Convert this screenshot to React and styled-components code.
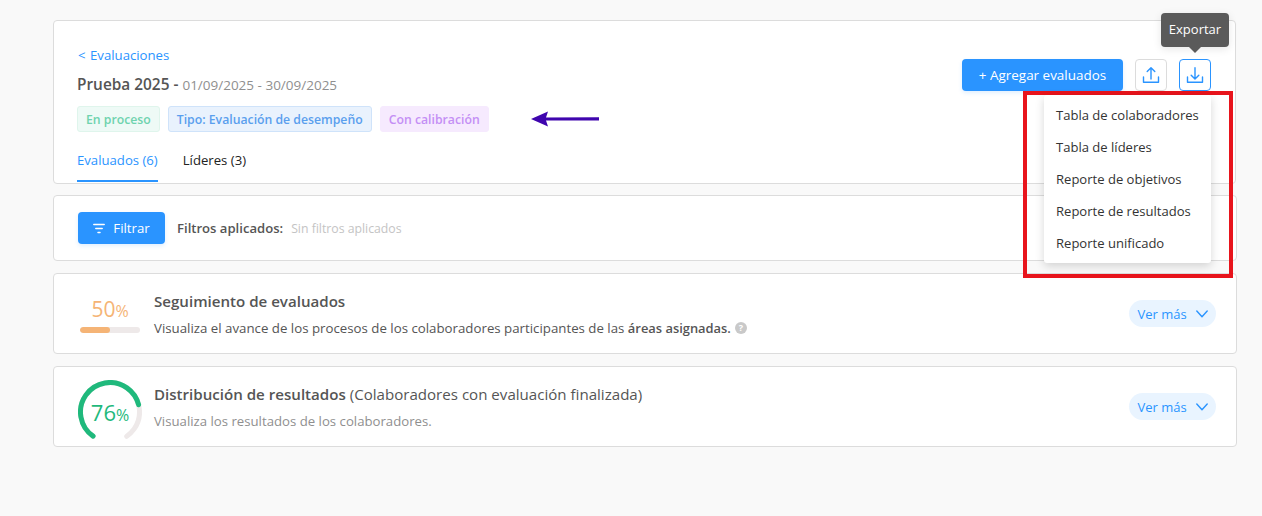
import React from "react";
import styled, { createGlobalStyle } from "styled-components";

const Global = createGlobalStyle`
  html, body { margin: 0; padding: 0; background: #f9f9f9; }
  body { font-family: "Open Sans", "Noto Sans", "Liberation Sans", sans-serif; font-size: 13px; color: #444; }
  * { box-sizing: border-box; }
`;

const Page = styled.div`
  position: relative;
  width: 1262px;
  height: 516px;
  padding: 20px 25px 0 53px;
  display: flex;
  flex-direction: column;
  gap: 12px;
  overflow: hidden;
`;

const Card = styled.section`
  background: #fff;
  border: 1px solid #dcdcdc;
  border-radius: 4px;
`;

const Header = styled(Card)`
  width: 1183px;
  height: 164px;
  margin-bottom: -1px;
  padding: 25px 24px 0 23px;
  display: flex;
  justify-content: space-between;
`;

const HeaderLeft = styled.div`
  display: flex;
  flex-direction: column;
`;

const BackLink = styled.a`
  color: #2a94ff;
  font-size: 13.2px;
  line-height: 18px;
  padding-left: 1px;
  word-spacing: 1px;
`;

const Title = styled.div`
  margin-top: 11px;
  line-height: 20px;
  font-size: 15.4px;
  font-weight: 600;
  color: #555;
`;

const Dates = styled.span`
  font-size: 13.5px;
  font-weight: 400;
  color: #8f8f8f;
`;

const Tags = styled.div`
  display: flex;
  gap: 8px;
  margin-top: 11px;
`;

const Tag = styled.span`
  height: 26px;
  padding: 0 8px;
  display: flex;
  align-items: center;
  font-size: 12.25px;
  font-weight: 600;
  border-radius: 3px;
  color: ${(p) => p.$color};
  background: ${(p) => p.$bg};
  border: 1px solid ${(p) => p.$line};
`;

const Tabs = styled.div`
  display: flex;
  gap: 25px;
  margin-top: 13px;
`;

const Tab = styled.div`
  height: 37px;
  padding-top: 6px;
  font-size: 13.15px;
  line-height: 18px;
  color: ${(p) => (p.$active ? "#2a94ff" : "#222")};
  border-bottom: 2px solid ${(p) => (p.$active ? "#2a94ff" : "transparent")};
`;

const Actions = styled.div`
  display: flex;
  align-items: flex-start;
  padding-top: 13px;
  height: 60px;
`;

const PrimaryButton = styled.button`
  height: 32px;
  display: flex;
  align-items: center;
  justify-content: center;
  gap: 8px;
  border: 0;
  border-radius: 4px;
  background: #2a94ff;
  color: #fff;
  font: inherit;
  font-size: ${(p) => p.$size}px;
  box-shadow: 0 2px 4px rgba(42, 148, 255, 0.15);
  width: ${(p) => p.$w}px;
  padding: 0;
`;

const IconButton = styled.button`
  width: 32px;
  height: 32px;
  margin-left: 12px;
  padding: 0;
  display: flex;
  align-items: center;
  justify-content: center;
  background: #fff;
  border-radius: 4px;
  border: 1px solid ${(p) => (p.$active ? "#2a94ff" : "#dcdcdc")};
`;

const FilterCard = styled(Card)`
  height: 66px;
  padding: 0 24px;
  display: flex;
  align-items: center;
`;

const FilterLabel = styled.span`
  margin-left: 12px;
  font-size: 13.1px;
  font-weight: 600;
  color: #555;
`;

const FilterEmpty = styled.span`
  margin-left: 8px;
  font-size: 12.25px;
  color: #c4c4c4;
`;

const SummaryCard = styled(Card)`
  height: 81px;
  padding: 0 20px 0 24px;
  display: flex;
  align-items: center;
`;

const Metric = styled.div`
  width: 76px;
  flex: none;
  display: flex;
  flex-direction: column;
`;

const BarValue = styled.div`
  width: 64px;
  text-align: center;
  color: #f5b476;
  font-size: 21px;
  line-height: 26px;
  margin-top: 2px;
  white-space: nowrap;
`;

const Pct = styled.span`
  font-size: 16px;
`;

const BarTrack = styled.div`
  width: 60px;
  height: 6px;
  margin: 3px 0 0 2px;
  background: #eee9e9;
  border-radius: 3px;
  overflow: hidden;
`;

const BarFill = styled.div`
  height: 100%;
  background: #f5b476;
  border-radius: 3px;
`;

const Gauge = styled.div`
  position: relative;
  width: 64px;
  height: 64px;
  margin-top: 11px;
`;

const GaugeValue = styled.div`
  position: absolute;
  top: 18px;
  left: 0;
  width: 64px;
  text-align: center;
  color: #1fb97c;
  font-size: 22px;
  line-height: 28px;
  white-space: nowrap;
`;

const SummaryText = styled.div`
  flex: 1;
  display: flex;
  flex-direction: column;
`;

const SummaryTitle = styled.div`
  font-size: 15.1px;
  line-height: 20px;
  color: #555;
  font-weight: ${(p) => (p.$plain ? 400 : 600)};
`;

const Strong = styled.span`
  font-weight: 600;
`;

const SmallStrong = styled(Strong)`
  font-size: 12.9px;
`;

const SummaryDesc = styled.div`
  display: flex;
  align-items: center;
  gap: 4px;
  margin-top: 8px;
  font-size: ${(p) => p.$size}px;
  line-height: 18px;
  color: ${(p) => p.$color};
`;

const HelpDot = styled.span`
  width: 12px;
  height: 12px;
  border-radius: 50%;
  background: #c9c9c9;
  color: #fff;
  font-size: 9px;
  font-weight: 700;
  line-height: 12px;
  text-align: center;
`;

const MoreButton = styled.button`
  width: 87px;
  height: 27px;
  border: 0;
  border-radius: 14px;
  background: #e9f4ff;
  color: #2a94ff;
  font: inherit;
  font-size: 13px;
  display: flex;
  align-items: center;
  justify-content: center;
  gap: 9px;
  padding: 0;
`;

const Tooltip = styled.div`
  position: absolute;
  left: 1161px;
  top: 13px;
  width: 68px;
  height: 34px;
  background: #5a5a5a;
  color: #fff;
  border-radius: 4px;
  font-size: 13px;
  line-height: 33px;
  text-align: center;
  box-shadow: 0 2px 8px rgba(0, 0, 0, 0.1);
  &::after {
    content: "";
    position: absolute;
    left: 28px;
    top: 34px;
    border: 6px solid transparent;
    border-top: 6px solid #5a5a5a;
    border-bottom: 0;
  }
`;

const Menu = styled.ul`
  position: absolute;
  left: 1044px;
  top: 95px;
  width: 167px;
  height: 168px;
  margin: 0;
  padding: 4px 0;
  list-style: none;
  background: #fff;
  border-radius: 3px;
  box-shadow: 0 3px 10px rgba(0, 0, 0, 0.16);
`;

const MenuItem = styled.li`
  height: 32px;
  padding-left: 12px;
  line-height: 32px;
  font-size: 13.05px;
  color: #333;
  white-space: nowrap;
`;

const RedFrame = styled.div`
  position: absolute;
  left: 1023px;
  top: 91px;
  width: 210px;
  height: 187px;
  border: 4px solid #e8141c;
  pointer-events: none;
`;

const Arrow = styled.svg`
  position: absolute;
  left: 530px;
  top: 108px;
`;

const UploadIcon = () => (
  <svg width="18" height="18" viewBox="0 0 18 18" fill="none" stroke="#2a94ff" strokeWidth="1.4" strokeLinecap="round" strokeLinejoin="round">
    <path d="M1.5 11v5.2h15V11" />
    <path d="M9 13V2M5.2 5.6 9 1.8l3.8 3.8" />
  </svg>
);

const DownloadIcon = () => (
  <svg width="18" height="18" viewBox="0 0 18 18" fill="none" stroke="#2a94ff" strokeWidth="1.4" strokeLinecap="round" strokeLinejoin="round">
    <path d="M1.5 11v5.2h15V11" />
    <path d="M9 1.8v11M5.2 9.2 9 13l3.8-3.8" />
  </svg>
);

const FilterIcon = () => (
  <svg width="12" height="11" viewBox="0 0 12 11" fill="none" stroke="#fff" strokeWidth="1.5" strokeLinecap="round">
    <path d="M.8 1.5h10.4M2.8 5.5h6.4M5 9.5h2" />
  </svg>
);

const Chevron = () => (
  <svg width="12" height="8" viewBox="0 0 12 8" fill="none" stroke="#2a94ff" strokeWidth="1.4" strokeLinecap="round" strokeLinejoin="round">
    <path d="M.8 1 6 6.8 11.2 1" />
  </svg>
);

const GaugeRing = () => {
  const r = 29.5;
  const c = 2 * Math.PI * r;
  const sweep = 290;
  const len = (sweep / 360) * c;
  return (
    <svg width="64" height="64" viewBox="0 0 64 64" fill="none" strokeWidth="5" strokeLinecap="round">
      <g transform="rotate(125 32 32)">
        <circle cx="32" cy="32" r={r} stroke="#eee9e9" strokeDasharray={`${len} ${c}`} />
        <circle cx="32" cy="32" r={r} stroke="#1fb97c" strokeDasharray={`${len * 0.76} ${c}`} />
      </g>
    </svg>
  );
};

const menu = ["Tabla de colaboradores", "Tabla de líderes", "Reporte de objetivos", "Reporte de resultados", "Reporte unificado"];

export default function App() {
  return (
    <Page>
      <Global />
      <Header>
        <HeaderLeft>
          <BackLink>&lt; Evaluaciones</BackLink>
          <Title>
            Prueba 2025 - <Dates>01/09/2025 - 30/09/2025</Dates>
          </Title>
          <Tags>
            <Tag $color="#6fd3ae" $bg="#eefaf6" $line="#dff5ec">En proceso</Tag>
            <Tag $color="#5a9fee" $bg="#e9f2fd" $line="#cfe3fa">Tipo: Evaluación de desempeño</Tag>
            <Tag $color="#c48ff5" $bg="#f6eafe" $line="#f6eafe">Con calibración</Tag>
          </Tags>
          <Tabs>
            <Tab $active>Evaluados (6)</Tab>
            <Tab>Líderes (3)</Tab>
          </Tabs>
        </HeaderLeft>
        <Actions>
          <PrimaryButton $w={161} $size={13.45}>+ Agregar evaluados</PrimaryButton>
          <IconButton><UploadIcon /></IconButton>
          <IconButton $active><DownloadIcon /></IconButton>
        </Actions>
      </Header>

      <FilterCard>
        <PrimaryButton $w={87} $size={13.2}><FilterIcon /> Filtrar</PrimaryButton>
        <FilterLabel>Filtros aplicados:</FilterLabel>
        <FilterEmpty>Sin filtros aplicados</FilterEmpty>
      </FilterCard>

      <SummaryCard>
        <Metric>
          <BarValue>50<Pct>%</Pct></BarValue>
          <BarTrack><BarFill style={{ width: "50%" }} /></BarTrack>
        </Metric>
        <SummaryText>
          <SummaryTitle>Seguimiento de evaluados</SummaryTitle>
          <SummaryDesc $size={13.27} $color="#555">
            <span>Visualiza el avance de los procesos de los colaboradores participantes de las <SmallStrong>áreas asignadas.</SmallStrong></span>
            <HelpDot>?</HelpDot>
          </SummaryDesc>
        </SummaryText>
        <MoreButton>Ver más <Chevron /></MoreButton>
      </SummaryCard>

      <SummaryCard>
        <Metric>
          <Gauge>
            <GaugeRing />
            <GaugeValue>76<Pct>%</Pct></GaugeValue>
          </Gauge>
        </Metric>
        <SummaryText>
          <SummaryTitle $plain><Strong>Distribución de resultados</Strong> (Colaboradores con evaluación finalizada)</SummaryTitle>
          <SummaryDesc $size={13.2} $color="#8f8f8f">Visualiza los resultados de los colaboradores.</SummaryDesc>
        </SummaryText>
        <MoreButton>Ver más <Chevron /></MoreButton>
      </SummaryCard>

      <Arrow width="70" height="22" viewBox="0 0 70 22" aria-hidden="true">
        <path d="M1 11 18 3.5 16 9.6 69 9.2V12.4L16 12.6 18 18.5Z" fill="#3f05ae" />
      </Arrow>
      <Tooltip>Exportar</Tooltip>
      <RedFrame />
      <Menu>
        {menu.map((m) => <MenuItem key={m}>{m}</MenuItem>)}
      </Menu>
    </Page>
  );
}
